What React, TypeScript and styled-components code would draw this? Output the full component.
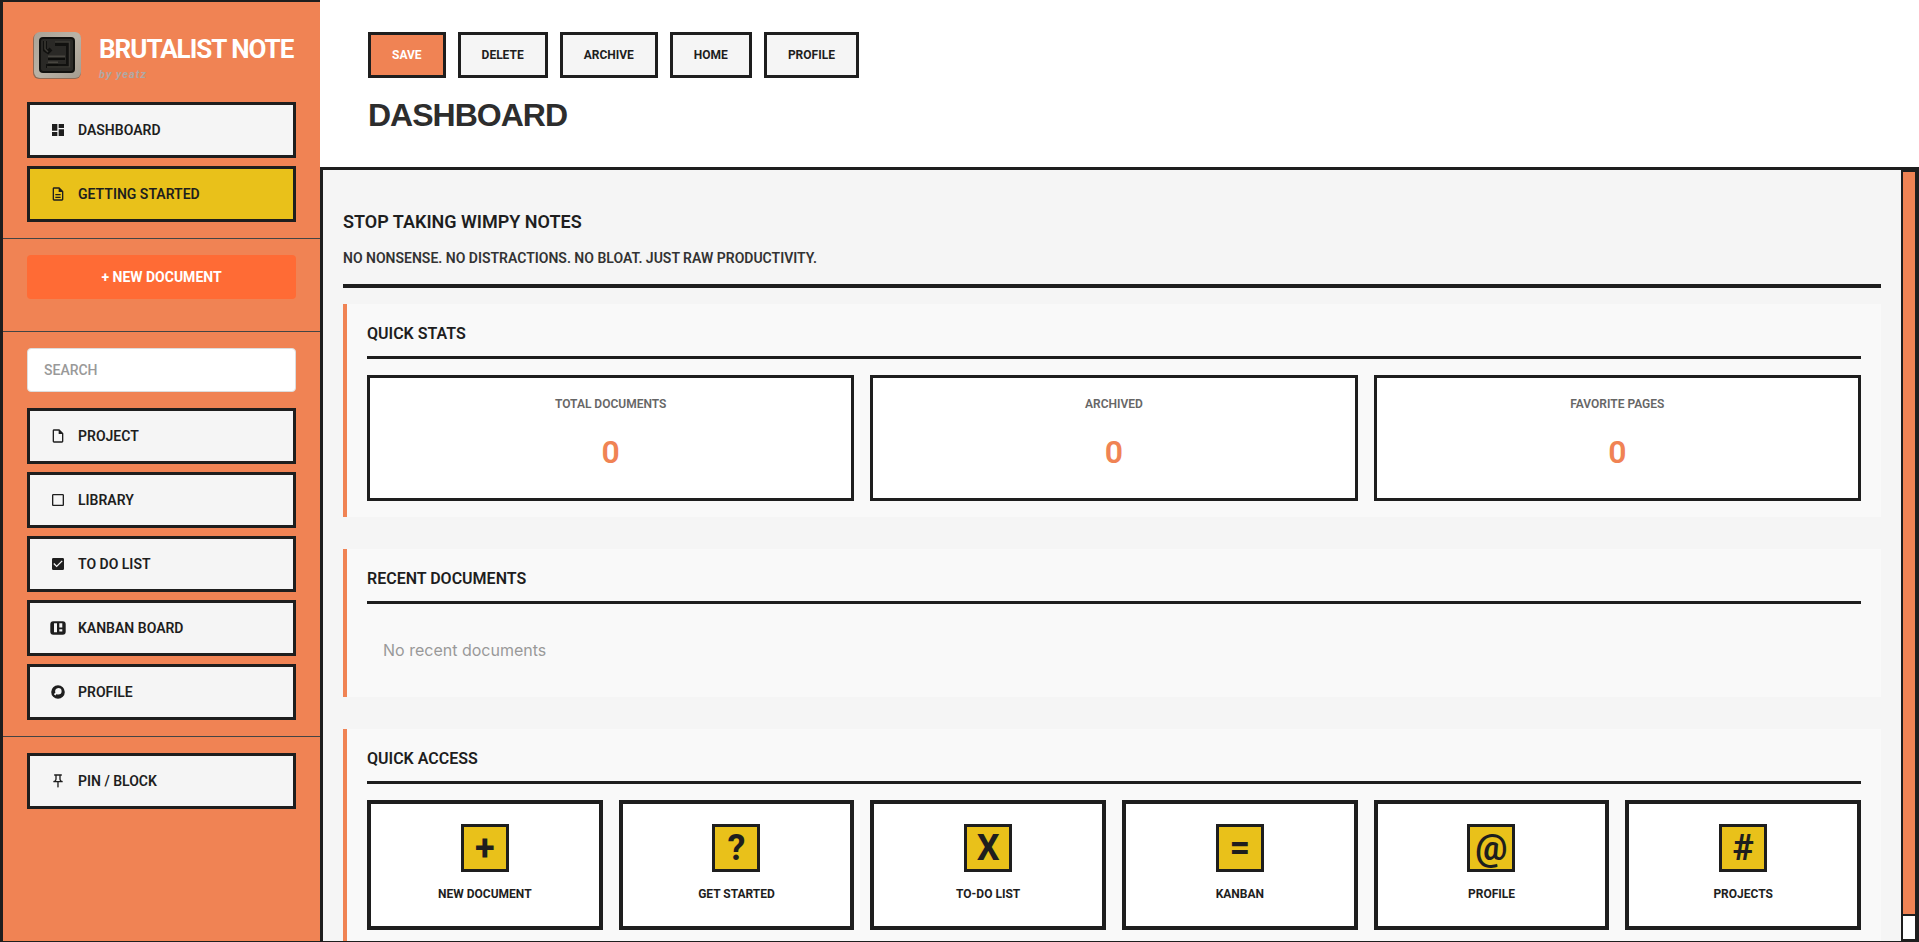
import React from 'react';
import styled, { createGlobalStyle, css } from 'styled-components';
import {
  MdCheckBox,
  MdCheckBoxOutlineBlank,
  MdDashboard,
  MdOutlineDescription,
  MdOutlineInsertDriveFile,
  MdOutlinePushPin,
} from 'react-icons/md';

const ink = '#1e1e1e';
const coral = '#f08354';
const yellow = '#e9c11a';
const paper = '#f5f5f5';

const GlobalStyle = createGlobalStyle`
  *, *::before, *::after { box-sizing: border-box; }
  body {
    margin: 0;
    background: ${paper};
    color: ${ink};
    font-family: Roboto, "Liberation Sans", sans-serif;
  }
  h1, h2, h3, p, dl, dt, dd { margin: 0; }
  button, input { font-family: inherit; }
  button { cursor: pointer; }
`;

const Shell = styled.div`
  display: flex;
  height: 100vh;
  border-bottom: 1px solid ${ink};
`;

const Sidebar = styled.aside`
  flex: none;
  width: 320px;
  background: ${coral};
  border-left: 3px solid ${ink};
  border-top: 2px solid ${ink};
`;

const Brand = styled.div`
  display: flex;
  align-items: center;
  gap: 12px;
  padding: 24px 0 0 24px;
`;

const BrandText = styled.div`
  padding-top: 5px;
  white-space: nowrap;
`;

const BrandName = styled.p`
  font-size: 26px;
  line-height: 32px;
  font-weight: 700;
  letter-spacing: -1px;
  color: #fff;
`;

const Byline = styled.p`
  font-size: 11px;
  line-height: 19px;
  font-weight: 700;
  font-style: italic;
  letter-spacing: 1px;
  color: #b0a8a4;
`;

const Section = styled.nav<{ $roomy?: boolean; $last?: boolean }>`
  display: flex;
  flex-direction: column;
  gap: 8px;
  padding: 16px 24px ${(p) => (p.$roomy ? 32 : 16)}px;
  border-bottom: ${(p) => (p.$last ? 'none' : '1px solid #444')};
`;

const NavButton = styled.button<{ $active?: boolean }>`
  display: flex;
  align-items: center;
  gap: 12px;
  height: 56px;
  padding: 0 20px;
  border: 3px solid ${ink};
  background: ${(p) => (p.$active ? yellow : paper)};
  color: ${ink};
  font-size: 14px;
  font-weight: 600;
  text-align: left;

  svg {
    flex: none;
    width: 16px;
    height: 16px;
  }
`;

const NewDocument = styled.button`
  height: 44px;
  border: 0;
  border-radius: 4px;
  background: #ff6b35;
  color: #fff;
  font-size: 14px;
  font-weight: 700;
`;

const SearchBox = styled.input`
  width: 100%;
  height: 44px;
  margin-bottom: 8px;
  padding: 0 16px;
  border: 1px solid #ddd;
  border-radius: 4px;
  background: #fff;
  color: ${ink};
  font-size: 14px;
  font-weight: 500;

  &::placeholder {
    color: #999;
    opacity: 1;
  }
`;

const Page = styled.div`
  flex: 1;
  min-width: 0;
  display: flex;
  flex-direction: column;
`;

const Header = styled.header`
  flex: none;
  padding: 32px 48px;
  background: #fff;
  border-bottom: 3px solid ${ink};
`;

const Toolbar = styled.div`
  display: flex;
  gap: 12px;
  margin-bottom: 18px;
`;

const ToolButton = styled.button<{ $primary?: boolean }>`
  height: 46px;
  padding: 0 21px;
  border: 3px solid ${ink};
  background: ${(p) => (p.$primary ? coral : paper)};
  color: ${(p) => (p.$primary ? '#fff' : ink)};
  font-size: 12px;
  font-weight: 700;
`;

const PageTitle = styled.h1`
  font-family: "Liberation Sans", Arial, sans-serif;
  font-size: 32px;
  line-height: 39px;
  font-weight: 700;
  letter-spacing: -1px;
  color: #2d2d2d;
`;

const Body = styled.div`
  flex: 1;
  min-height: 0;
  display: flex;
  border-left: 3px solid ${ink};
`;

const Content = styled.main`
  flex: 1;
  min-width: 0;
  overflow-y: auto;
  scrollbar-width: none;
  padding: 20px;
`;

const ScrollTrack = styled.div`
  flex: none;
  width: 18px;
  background: #fff;
  border: solid ${ink};
  border-width: 2px 4px 2px 2px;
`;

const ScrollThumb = styled.div`
  height: 97%;
  background: ${coral};
  border-bottom: 2px solid ${ink};
`;

const Intro = styled.section`
  padding: 20px 0 14px;
  margin-bottom: 16px;
  border-bottom: 4px solid ${ink};
`;

const IntroTitle = styled.h2`
  margin-bottom: 12px;
  font-size: 18px;
  line-height: 24px;
  font-weight: 600;
`;

const IntroText = styled.p`
  font-size: 14px;
  line-height: 24px;
  font-weight: 600;
  color: #333;
`;

const Card = styled.section`
  margin-bottom: 32px;
  padding: 16px 20px;
  border-left: 4px solid ${coral};
  background: #f9f9f9;
`;

const CardTitle = styled.h3`
  margin-bottom: 16px;
  padding-bottom: 8px;
  border-bottom: 3px solid ${ink};
  font-size: 16px;
  line-height: 28px;
  font-weight: 600;
`;

const grid = css`
  display: grid;
  gap: 16px;
`;

const StatGrid = styled.dl`
  ${grid}
  grid-template-columns: repeat(3, 1fr);
`;

const Stat = styled.div`
  padding: 16px;
  border: 3px solid ${ink};
  background: #fff;
  text-align: center;
`;

const StatLabel = styled.dt`
  margin-bottom: 8px;
  font-size: 12px;
  line-height: 20px;
  font-weight: 600;
  color: #666;
`;

const StatValue = styled.dd`
  font-size: 32px;
  line-height: 60px;
  font-weight: 600;
  color: ${coral};
`;

const Empty = styled.p`
  padding: 16px;
  font-family: Inter, Roboto, sans-serif;
  font-size: 16px;
  line-height: 29px;
  color: #999;
`;

const TileGrid = styled.div`
  ${grid}
  grid-template-columns: repeat(6, 1fr);
`;

const Tile = styled.button`
  display: flex;
  flex-direction: column;
  align-items: center;
  gap: 10px;
  padding: 20px;
  border: 4px solid ${ink};
  background: #fff;
  color: ${ink};
  font-size: 12px;
  line-height: 24px;
  font-weight: 700;
`;

const TileGlyph = styled.span`
  display: flex;
  align-items: center;
  justify-content: center;
  width: 48px;
  height: 48px;
  border: 3px solid ${ink};
  background: ${yellow};
  font-size: 36px;
  font-weight: 700;
`;

const Logo = () => (
  <svg width="60" height="60" viewBox="0 0 60 60" aria-hidden="true">
    <defs>
      <linearGradient id="stone" x1="0" y1="0" x2="1" y2="1">
        <stop offset="0" stopColor="#aaa296" />
        <stop offset="0.5" stopColor="#bab3a7" />
        <stop offset="1" stopColor="#a39b8f" />
      </linearGradient>
    </defs>
    <rect x="6" y="7" width="48" height="46" rx="6" fill="#8f6a55" />
    <rect x="7" y="6" width="47" height="46" rx="6" fill="url(#stone)" />
    <rect x="12" y="11" width="36" height="36" rx="4" fill="#11110f" />
    <rect x="14" y="13" width="32" height="32" rx="2" fill="#2a2926" />
    <path d="M18 15v9l3 2 3-3M28 18h13v22H19" fill="none" stroke="#11110f" strokeWidth="4" />
    <path d="M18 15v8l3 3M28 16h14.500v25H20" fill="none" stroke="#3d3b36" strokeWidth="1.500" />
    <path d="M21 32h17M21 38h10" stroke="#0d0d0b" strokeWidth="4" />
    <path d="M21 30.500h17M21 36.500h10" stroke="#484640" strokeWidth="2" />
  </svg>
);

const KanbanIcon = () => (
  <svg viewBox="0 0 16 16" fill="currentColor" aria-hidden="true">
    <path
      fillRule="evenodd"
      d="M3.300 1.300h9.400a3 3 0 0 1 3 3v7.400a3 3 0 0 1-3 3H3.300a3 3 0 0 1-3-3V4.300a3 3 0 0 1 3-3zM4 3.200v9h3v-9zM9.300 3.200v4.400h3V3.200zM9.300 9.200v2.400h3V9.200z"
    />
  </svg>
);

const ProfileIcon = () => (
  <svg viewBox="0 0 16 16" fill="currentColor" aria-hidden="true">
    <path
      fillRule="evenodd"
      d="M8 1.200a6.800 6.800 0 1 0 0 13.600A6.800 6.800 0 0 0 8 1.200zM8.300 4a3.300 3.300 0 0 1 0 6.600c-.6 0-1-.1-1.500-.4-.6 0-.8.400-1.100 1.200l-1.700-1c.3-1 .9-1.500 1.400-1.700A3.300 3.300 0 0 1 8.300 4z"
    />
  </svg>
);

const workspaceLinks = [
  { label: 'PROJECT', icon: <MdOutlineInsertDriveFile /> },
  { label: 'LIBRARY', icon: <MdCheckBoxOutlineBlank /> },
  { label: 'TO DO LIST', icon: <MdCheckBox /> },
  { label: 'KANBAN BOARD', icon: <KanbanIcon /> },
  { label: 'PROFILE', icon: <ProfileIcon /> },
];

const actions = ['SAVE', 'DELETE', 'ARCHIVE', 'HOME', 'PROFILE'];

const stats = [
  { label: 'TOTAL DOCUMENTS', value: 0 },
  { label: 'ARCHIVED', value: 0 },
  { label: 'FAVORITE PAGES', value: 0 },
];

const shortcuts = [
  { glyph: '+', label: 'NEW DOCUMENT' },
  { glyph: '?', label: 'GET STARTED' },
  { glyph: 'X', label: 'TO-DO LIST' },
  { glyph: '=', label: 'KANBAN' },
  { glyph: '@', label: 'PROFILE' },
  { glyph: '#', label: 'PROJECTS' },
];

export default function App() {
  return (
    <>
      <GlobalStyle />
      <Shell>
        <Sidebar>
          <Brand>
            <Logo />
            <BrandText>
              <BrandName>BRUTALIST NOTE</BrandName>
              <Byline>by yeatz</Byline>
            </BrandText>
          </Brand>
          <Section aria-label="Main">
            <NavButton>
              <MdDashboard />
              DASHBOARD
            </NavButton>
            <NavButton $active>
              <MdOutlineDescription />
              GETTING STARTED
            </NavButton>
          </Section>
          <Section as="div" $roomy>
            <NewDocument>+ NEW DOCUMENT</NewDocument>
          </Section>
          <Section aria-label="Workspace">
            <SearchBox type="search" placeholder="SEARCH" aria-label="Search" />
            {workspaceLinks.map((link) => (
              <NavButton key={link.label}>
                {link.icon}
                {link.label}
              </NavButton>
            ))}
          </Section>
          <Section aria-label="Pinned" $last>
            <NavButton>
              <MdOutlinePushPin />
              PIN / BLOCK
            </NavButton>
          </Section>
        </Sidebar>
        <Page>
          <Header>
            <Toolbar>
              {actions.map((action) => (
                <ToolButton key={action} $primary={action === 'SAVE'}>
                  {action}
                </ToolButton>
              ))}
            </Toolbar>
            <PageTitle>DASHBOARD</PageTitle>
          </Header>
          <Body>
            <Content>
              <Intro>
                <IntroTitle>STOP TAKING WIMPY NOTES</IntroTitle>
                <IntroText>NO NONSENSE. NO DISTRACTIONS. NO BLOAT. JUST RAW PRODUCTIVITY.</IntroText>
              </Intro>
              <Card>
                <CardTitle>QUICK STATS</CardTitle>
                <StatGrid>
                  {stats.map((stat) => (
                    <Stat key={stat.label}>
                      <StatLabel>{stat.label}</StatLabel>
                      <StatValue>{stat.value}</StatValue>
                    </Stat>
                  ))}
                </StatGrid>
              </Card>
              <Card>
                <CardTitle>RECENT DOCUMENTS</CardTitle>
                <Empty>No recent documents</Empty>
              </Card>
              <Card>
                <CardTitle>QUICK ACCESS</CardTitle>
                <TileGrid>
                  {shortcuts.map((shortcut) => (
                    <Tile key={shortcut.label}>
                      <TileGlyph>{shortcut.glyph}</TileGlyph>
                      {shortcut.label}
                    </Tile>
                  ))}
                </TileGrid>
              </Card>
            </Content>
            <ScrollTrack aria-hidden="true">
              <ScrollThumb />
            </ScrollTrack>
          </Body>
        </Page>
      </Shell>
    </>
  );
}
